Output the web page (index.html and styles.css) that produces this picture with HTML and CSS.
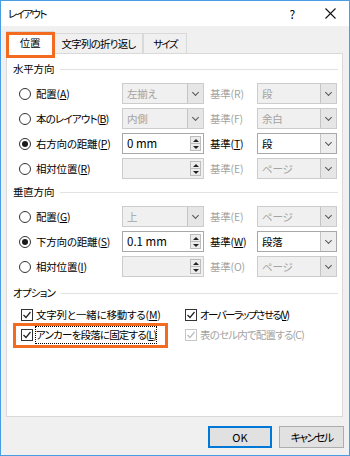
FILE: index.html
```html
<!DOCTYPE html>
<html lang="ja">
<head>
    <meta charset="UTF-8">
    <meta name="viewport" content="width=device-width, initial-scale=1.0">
    <title>レイアウト</title>
    <link rel="stylesheet" href="styles.css">
</head>
<body>

<div class="window">
    <div class="titlebar">
        <span class="title k2">レイアウト</span>
        <span class="help">?</span>
        <span class="close">
            <svg width="11" height="11" viewBox="0 0 11 11"><path d="M0.5 0.5L10.5 10.5M10.5 0.5L0.5 10.5" stroke="#111" stroke-width="1.1" fill="none"/></svg>
        </span>
    </div>

    <div class="tabs">
        <div class="tab active">位置</div>
        <div class="tab wrap k1">文字列の折り返し</div>
        <div class="tab size k2">サイズ</div>
    </div>

    <div class="panel">
        <div class="group-title">水平方向</div>
        <div class="row">
            <label class="opt"><span class="radio"></span>配置(<u>A</u>)</label>
            <div class="combo off"><span class="val">左揃え</span><span class="arrow"></span></div>
            <span class="ref off">基準(R)</span>
            <div class="combo base off"><span class="val">段</span><span class="arrow"></span></div>
        </div>
        <div class="row">
            <label class="opt k1"><span class="radio"></span>本のレイアウト(<u>B</u>)</label>
            <div class="combo off"><span class="val">内側</span><span class="arrow"></span></div>
            <span class="ref off">基準(F)</span>
            <div class="combo base off"><span class="val">余白</span><span class="arrow"></span></div>
        </div>
        <div class="row">
            <label class="opt"><span class="radio on"></span>右方向の距離(<u>P</u>)</label>
            <div class="spinbox"><span class="val num">0 mm</span><span class="spin"><i class="up"></i><i class="down"></i></span></div>
            <span class="ref">基準(<u>T</u>)</span>
            <div class="combo base"><span class="val">段</span><span class="arrow"></span></div>
        </div>
        <div class="row">
            <label class="opt"><span class="radio"></span>相対位置(<u>R</u>)</label>
            <div class="spinbox off"><span class="val"></span><span class="spin"><i class="up"></i><i class="down"></i></span></div>
            <span class="ref off">基準(E)</span>
            <div class="combo base off"><span class="val">ページ</span><span class="arrow"></span></div>
        </div>

        <div class="group-title second">垂直方向</div>
        <div class="row">
            <label class="opt"><span class="radio"></span>配置(<u>G</u>)</label>
            <div class="combo off"><span class="val">上</span><span class="arrow"></span></div>
            <span class="ref off">基準(E)</span>
            <div class="combo base off"><span class="val">ページ</span><span class="arrow"></span></div>
        </div>
        <div class="row">
            <label class="opt"><span class="radio on"></span>下方向の距離(<u>S</u>)</label>
            <div class="spinbox"><span class="val num">0.1 mm</span><span class="spin"><i class="up"></i><i class="down"></i></span></div>
            <span class="ref">基準(<u>W</u>)</span>
            <div class="combo base"><span class="val">段落</span><span class="arrow"></span></div>
        </div>
        <div class="row">
            <label class="opt"><span class="radio"></span>相対位置(<u>I</u>)</label>
            <div class="spinbox off"><span class="val"></span><span class="spin"><i class="up"></i><i class="down"></i></span></div>
            <span class="ref off">基準(O)</span>
            <div class="combo base off"><span class="val">ページ</span><span class="arrow"></span></div>
        </div>

        <div class="group-title third k1">オプション</div>
        <div class="checks">
            <label class="check"><span class="box"><svg width="10" height="10" viewBox="0 0 10 10"><path d="M1.5 5L4 7.5L8.5 2" fill="none" stroke="#222" stroke-width="1.2"/></svg></span>文字列と一緒に移動する(<u>M</u>)</label>
            <label class="check k2"><span class="box"><svg width="10" height="10" viewBox="0 0 10 10"><path d="M1.5 5L4 7.5L8.5 2" fill="none" stroke="#222" stroke-width="1.2"/></svg></span>オーバーラップさせる(<u>V</u>)</label>
            <label class="check k1"><span class="box"><svg width="10" height="10" viewBox="0 0 10 10"><path d="M1.5 5L4 7.5L8.5 2" fill="none" stroke="#222" stroke-width="1.2"/></svg></span><span class="focus">アンカーを段落に固定する(<u>L</u>)</span></label>
            <label class="check off k1"><span class="box"><svg width="10" height="10" viewBox="0 0 10 10"><path d="M1.5 5L4 7.5L8.5 2" fill="none" stroke="#bdbdbd" stroke-width="1.2"/></svg></span>表のセル内で配置する(C)</label>
        </div>
    </div>

    <div class="buttons">
        <button class="btn default">OK</button>
        <button class="btn k2">キャンセル</button>
    </div>

    <!-- orange highlight marks drawn over the dialog -->
    <div class="mark mark-tab"></div>
    <div class="mark mark-anchor"></div>
</div>

</body>
</html>
```

FILE: styles.css
```css
* {
    box-sizing: border-box;
}
body {
    margin: 0;
    font-family: "Noto Sans CJK JP", "Noto Sans", sans-serif;
    font-size: 10.5px;
    line-height: 16px;
    font-feature-settings: "palt";
    letter-spacing: -0.2px;
    color: #000;
}
u {
    text-decoration: underline;
    text-underline-offset: 1px;
}
.k1 {
    letter-spacing: -0.8px;
}
.k2 {
    letter-spacing: -1.6px;
}
.window {
    position: relative;
    width: 350px;
    height: 456px;
    border: 1px solid #4a9ce4;
    background-color: #f0f0f0;
    white-space: nowrap;
}
.titlebar {
    height: 25px;
    background-color: #fff;
    display: flex;
    align-items: center;
    padding-left: 7px;
}
.title {
    flex: 1;
}
.help {
    margin-right: 30px;
    font-size: 12px;
}
.close {
    display: flex;
    margin-right: 13px;
}

/* tabs */
.tabs {
    height: 27px;
    display: flex;
    align-items: flex-end;
    padding-left: 5px;
}
.tab {
    height: 20px;
    border: 1px solid #d9d9d9;
    border-bottom: none;
    background-color: #f0f0f0;
    display: flex;
    align-items: center;
    justify-content: center;
}
.tab.active {
    width: 48px;
    height: 23px;
    margin-bottom: -1px;
    position: relative;
    z-index: 1;
    background-color: #fff;
}
.tab.wrap {
    width: 89px;
}
.tab.size {
    width: 44px;
}

/* main panel */
.panel {
    margin: 0 6px 0 5px;
    height: 364px;
    background-color: #fff;
    border: 1px solid #d9d9d9;
    padding: 7px 0 0 6px;
}
.group-title {
    height: 16px;
    display: flex;
    align-items: center;
    margin-bottom: 4px;
}
.group-title::after {
    content: "";
    flex: 1;
    height: 1px;
    margin: 1px 4px 0 6px;
    background-color: #e2e2e2;
}
.group-title.second {
    margin-top: 3px;
}
.group-title.third {
    margin-top: 6px;
}
.row {
    height: 25px;
    display: flex;
    align-items: center;
    padding-left: 6px;
}
.opt {
    width: 103px;
    flex-shrink: 0;
    display: flex;
    align-items: center;
}
.radio {
    width: 12px;
    height: 12px;
    flex-shrink: 0;
    border: 1px solid #333;
    border-radius: 50%;
    margin-right: 5px;
    display: flex;
    align-items: center;
    justify-content: center;
}
.radio.on::after {
    content: "";
    width: 6px;
    height: 6px;
    border-radius: 50%;
    background-color: #1a1a1a;
}
.ref {
    width: 53px;
    flex-shrink: 0;
    padding-left: 6px;
}
.ref.off, .off .val, .check.off {
    color: #a3a3a3;
}

/* combo boxes and spin fields */
.combo, .spinbox {
    width: 82px;
    height: 21px;
    flex-shrink: 0;
    display: flex;
    border: 1px solid #a8a8a8;
    background-color: #fff;
}
.combo.base {
    width: 80px;
}
.combo.off, .spinbox.off {
    border-color: #cccccc;
    background-color: #f0f0f0;
}
.val {
    flex: 1;
    padding-left: 4px;
    line-height: 19px;
}
.val.num {
    font-size: 11.5px;
    letter-spacing: 0;
}
.arrow {
    width: 16px;
    border-left: 1px solid #c4c4c4;
    background-color: #e6e6e6;
    display: flex;
    align-items: center;
    justify-content: center;
}
.combo:not(.off) .arrow {
    background-color: #eeeeee;
}
.arrow::after {
    content: "";
    width: 4px;
    height: 4px;
    margin-top: -3px;
    border-right: 1px solid #555;
    border-bottom: 1px solid #555;
    transform: rotate(45deg);
}
.spin {
    width: 11px;
    margin: 2px 2px 2px 0;
    display: flex;
    flex-direction: column;
    border: 1px solid #bcbcbc;
    background-color: #ececec;
}
.spin i {
    flex: 1;
    display: flex;
    align-items: center;
    justify-content: center;
}
.spin i.up {
    border-bottom: 1px solid #bcbcbc;
}
.spin i.up::after {
    content: "";
    border-left: 3px solid transparent;
    border-right: 3px solid transparent;
    border-bottom: 3px solid #222;
}
.spin i.down::after {
    content: "";
    border-left: 3px solid transparent;
    border-right: 3px solid transparent;
    border-top: 3px solid #222;
}

/* options */
.checks {
    display: grid;
    grid-template-columns: 164px auto;
    grid-auto-rows: 20px;
    padding-left: 8px;
}
.check {
    display: flex;
    align-items: center;
}
.box {
    width: 12px;
    height: 12px;
    flex-shrink: 0;
    border: 1px solid #333;
    margin-right: 3px;
    display: flex;
    align-items: center;
    justify-content: center;
}
.check.off .box {
    border-color: #c6c6c6;
}
.focus {
    outline: 1px dotted #000;
    outline-offset: 0;
}

/* bottom buttons */
.buttons {
    display: flex;
    justify-content: flex-end;
    gap: 7px;
    padding: 9px 5px 0 0;
}
.btn {
    height: 22px;
    width: 65px;
    font-family: inherit;
    font-size: 11px;
    font-feature-settings: "palt";
    line-height: 16px;
    color: #000;
    background-color: #e1e1e1;
    border: 1px solid #adadad;
    padding: 0;
}
.btn.default {
    width: 64px;
    border-color: #0078d7;
    box-shadow: inset 0 0 0 1px #0078d7;
}

/* orange highlight marks */
.mark {
    position: absolute;
    border: 3px solid #f26b21;
    z-index: 2;
}
.mark-tab {
    left: 5px;
    top: 31px;
    width: 49px;
    height: 26px;
}
.mark-anchor {
    left: 12px;
    top: 322px;
    width: 155px;
    height: 25px;
}
```
